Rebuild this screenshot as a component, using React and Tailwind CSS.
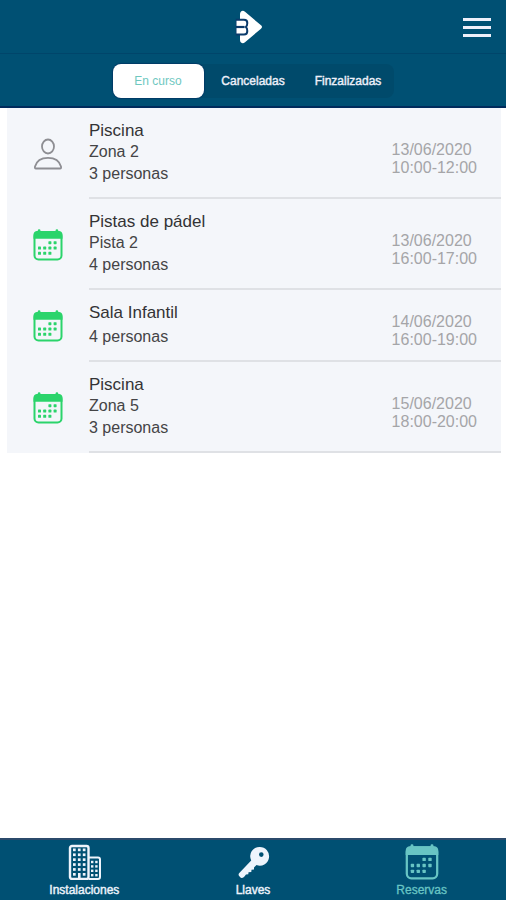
import React, { useState } from 'react';

const tabs = ['En curso', 'Canceladas', 'Finzalizadas'];

const reservas = [
  { id: 1, nombre: 'Piscina', zona: 'Zona 2', personas: '3 personas', fecha: '13/06/2020', hora: '10:00-12:00', icono: 'persona' },
  { id: 2, nombre: 'Pistas de pádel', zona: 'Pista 2', personas: '4 personas', fecha: '13/06/2020', hora: '16:00-17:00', icono: 'calendario' },
  { id: 3, nombre: 'Sala Infantil', zona: null, personas: '4 personas', fecha: '14/06/2020', hora: '16:00-19:00', icono: 'calendario' },
  { id: 4, nombre: 'Piscina', zona: 'Zona 5', personas: '3 personas', fecha: '15/06/2020', hora: '18:00-20:00', icono: 'calendario' },
];

const LogoIcon = () => (
  <svg viewBox="0 0 36 34" className="w-9 h-[34px]" aria-hidden="true">
    <path d="M6 1.5Q8 0 10 1.8L26 15.3Q28 17 26 18.700L10 32.2Q8 34 6 32.5Q5 31.5 5 30V4Q5 2.5 6 1.5Z" fill="#fff" />
    <path
      d="M0.500 9.800H9Q12.300 9.800 12.300 13Q12.300 16 10.800 17Q12.300 18 12.300 21Q12.300 24.600 9 24.600H0.500Z"
      fill="#fff"
      stroke="#0a3a6b"
      strokeWidth="2"
    />
    <path d="M0 17H9.500" stroke="#0a3a6b" strokeWidth="2.200" />
    <path d="M0 8V26" stroke="#005073" strokeWidth="1.600" />
  </svg>
);

const PersonIcon = ({ className }) => (
  <svg viewBox="0 0 30 32" className={className} fill="none" stroke="currentColor" strokeWidth="1.800" strokeLinejoin="round" aria-hidden="true">
    <ellipse cx="15" cy="8.500" rx="6" ry="7" />
    <path d="M3 30.500C2 30.500 1.700 30 2 28.500C3.500 23 8.500 19.800 15 19.800S26.500 23 28 28.500C28.300 30 28 30.500 27 30.500Z" />
  </svg>
);

const CalendarIcon = ({ className }) => (
  <svg viewBox="0 0 30 32" className={className} fill="currentColor" aria-hidden="true">
    <rect x="4.800" y="0.300" width="2.600" height="5" rx="1.200" />
    <rect x="22.600" y="0.300" width="2.600" height="5" rx="1.200" />
    <path d="M4.500 2H25.500Q29.500 2 29.500 6V9.800H0.500V6Q0.500 2 4.500 2Z" />
    <rect x="1.500" y="3" width="27" height="27.500" rx="4" fill="none" stroke="currentColor" strokeWidth="2" />
    {[[16.8, 13.6], [22, 13.6], [6.4, 19], [11.6, 19], [16.8, 19], [22, 19], [6.4, 24.2], [11.6, 24.2], [16.8, 24.2]].map(([x, y]) => (
      <rect key={`${x}-${y}`} x={x - 1.4} y={y - 1.4} width="3" height="3" rx="0.600" />
    ))}
  </svg>
);

const BuildingIcon = ({ className }) => (
  <svg viewBox="0 0 34 36" className={className} fill="currentColor" aria-hidden="true">
    <rect x="3" y="2" width="18.500" height="33" rx="2" fill="none" stroke="currentColor" strokeWidth="2.400" />
    <path d="M21.500 13.500H31Q33 13.500 33 15.500V33Q33 35 31 35H21.500" fill="none" stroke="currentColor" strokeWidth="2" />
    {[5.8, 10.7, 15.6, 20.5, 25.4].map((y) =>
      [7.3, 12.2, 17.1].map((x) => (
        <rect key={`${x}-${y}`} x={x - 1.3} y={y - 1.3} width="2.700" height="2.700" />
      ))
    )}
    <rect x="6" y="29" width="2.700" height="2.700" />
    <rect x="15.800" y="29" width="2.700" height="2.700" />
    <rect x="11" y="29" width="2.600" height="6" />
    {[18, 22.4, 26.8, 31.2].map((y) =>
      [25.2, 29.4].map((x) => (
        <rect key={`${x}-${y}`} x={x - 1.2} y={y - 1.2} width="2.400" height="2.400" />
      ))
    )}
  </svg>
);

const KeyIcon = ({ className }) => (
  <svg viewBox="0 0 34 36" className={className} fill="currentColor" fillRule="evenodd" aria-hidden="true">
    <path d="M23.700 3A9.300 9.300 0 1 1 20.500 21L18 23.500L18 25.500L15.500 25.800L15.300 28L12.500 28.300L12.300 30.200L10 30.500L8 33Q5.500 35 4 33L3 31.800Q2 30.500 3.300 29L15.200 16.500A9.300 9.300 0 0 1 23.700 3ZM25.300 8.300A2.300 2.300 0 1 0 25.300 12.900A2.300 2.300 0 1 0 25.300 8.300Z" />
  </svg>
);

const navItems = [
  { nombre: 'Instalaciones', Icon: BuildingIcon },
  { nombre: 'Llaves', Icon: KeyIcon },
  { nombre: 'Reservas', Icon: CalendarIcon },
];

const App = () => {
  const [activeTab, setActiveTab] = useState('En curso');

  return (
    <div className="min-h-screen flex flex-col bg-white font-['Liberation_Sans',Arial,sans-serif]">
      <header className="bg-[#005073] border-b-2 border-[#002b5c]">
        <div className="grid grid-cols-3 items-center h-[54px] px-[15px] border-b border-[#00456a]">
          <span />
          <div className="flex justify-center"><LogoIcon /></div>
          <button type="button" aria-label="Menú" className="justify-self-end flex flex-col gap-[5px] pt-0.5">
            <span className="block w-7 h-[3px] bg-[#eef0fa]" />
            <span className="block w-7 h-[3px] bg-[#eef0fa]" />
            <span className="block w-7 h-[3px] bg-[#eef0fa]" />
          </button>
        </div>
        <div className="flex justify-center h-[52px] pt-2.5 pb-2">
          <div className="flex gap-1 bg-[#004a6b] rounded-lg">
            {tabs.map((tab) => (
              <button
                key={tab}
                type="button"
                onClick={() => setActiveTab(tab)}
                className={
                  activeTab === tab
                    ? 'w-[91px] rounded-lg bg-white text-xs text-[#6fc8bf] shadow-[0_0_1px_1px_#003a66]'
                    : 'w-[91px] rounded-lg text-xs text-[#eef0fa] [-webkit-text-stroke:0.4px]'
                }
              >
                {tab}
              </button>
            ))}
          </div>
        </div>
      </header>

      <main className="flex-1">
        <ul className="ml-[7px] mr-[5px] bg-[#f4f6fa]">
          {reservas.map((reserva) => (
            <li key={reserva.id} className="flex items-stretch">
              <div className="w-[82px] flex items-center justify-center">
                {reserva.icono === 'persona' ? (
                  <PersonIcon className="w-[30px] h-8 text-[#8e8e93]" />
                ) : (
                  <CalendarIcon className="w-[30px] h-8 text-[#2bd46b]" />
                )}
              </div>
              <div className="flex-1 flex items-center justify-between pr-6 border-b-2 border-[#dfe1e5]">
                <div className="py-3 text-base text-[#444446]">
                  <h2 className="text-[17px] leading-[21px] text-[#333335]">{reserva.nombre}</h2>
                  {reserva.zona && <p className="leading-[21px]">{reserva.zona}</p>}
                  <p className={reserva.zona ? 'leading-[23px]' : 'mt-0.5 leading-[23px]'}>{reserva.personas}</p>
                </div>
                <div className="pt-3 text-base leading-[18px] text-[#a5a5a8]">
                  <p>{reserva.fecha}</p>
                  <p>{reserva.hora}</p>
                </div>
              </div>
            </li>
          ))}
        </ul>
      </main>

      <nav className="grid grid-cols-3 bg-[#005073] border-t-2 border-[#2b4a6b] pt-1">
        {navItems.map(({ nombre, Icon }) => (
          <a
            key={nombre}
            href="#"
            className={
              nombre === 'Reservas'
                ? 'flex flex-col items-center text-xs text-[#68c5c4] [-webkit-text-stroke:0.3px]'
                : 'flex flex-col items-center text-xs text-[#eef4fc] [-webkit-text-stroke:0.4px]'
            }
          >
            <Icon className="w-[34px] h-9" />
            <span className="py-[3px] leading-[14px]">{nombre}</span>
          </a>
        ))}
      </nav>
    </div>
  );
};

export default App;
